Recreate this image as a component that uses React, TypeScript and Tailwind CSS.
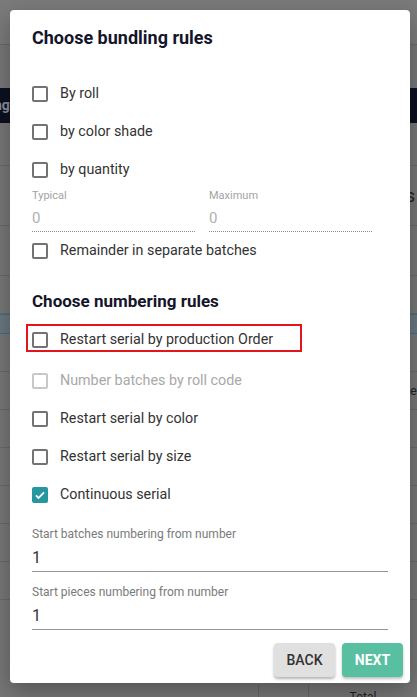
import React from 'react';

type RowProps = { label: string; checked?: boolean; disabled?: boolean };

const Checkbox: React.FC<RowProps> = ({ label, checked, disabled }) => (
  <label className="flex h-[38px] items-center">
    {checked ? (
      <span className="flex h-4 w-4 items-center justify-center rounded-[2px] bg-[#26979f]">
        <svg viewBox="0 0 24 24" className="h-[14px] w-[14px]" fill="none" stroke="white" strokeWidth="3">
          <path d="M5 12.5l4.5 4.5L19 7.5" />
        </svg>
      </span>
    ) : (
      <span
        className={`h-4 w-4 rounded-[2px] border-2 ${disabled ? 'border-[#c8c8c8]' : 'border-[#737373]'}`}
      />
    )}
    <span className={`ml-[12px] text-[14.3px] ${disabled ? 'text-[#a8a8a8]' : 'text-[#333333]'}`}>{label}</span>
  </label>
);

const NumberField: React.FC<{ label: string; value: string }> = ({ label, value }) => (
  <div className="flex flex-col">
    <span className="text-[12px] leading-[14px] text-[#7a7a7a]">{label}</span>
    <span className="flex h-[31px] items-center border-b border-[#949494] pt-[4px] text-[16px] text-[#333333]">{value}</span>
  </div>
);

export default function App() {
  return (
    <div className="relative h-[697px] w-[417px] overflow-hidden bg-[#777777] font-['Roboto',sans-serif]">
      {/* dimmed page behind the dialog */}
      <div className="flex flex-col">
        <div className="h-[45px] border-b border-[#6a6a6a] bg-[#7b7b7b]" />
        <div className="h-[43px]" />
        <div className="flex h-[35px] items-center bg-[#0d1020] text-[14px] font-bold text-[#8a8fa0]">
          <span className="-ml-[6px]">ngt</span>
        </div>
        <div className="h-[43px] border-b border-[#6a6a6a]" />
        <div className="flex h-[60px] items-center justify-end border-b border-[#6a6a6a] pr-[2px] text-[18px] text-[#222]">s</div>
        <div className="h-[50px] border-b border-[#6a6a6a]" />
        <div className="h-[38px] border-b border-[#6a6a6a]" />
        <div className="h-[20px] border-y border-[#3f6f86] bg-[#6a7880]" />
        <div className="h-[38px] border-b border-[#6a6a6a]" />
        <div className="flex h-[38px] items-center justify-end border-b border-[#6a6a6a] text-[13px] text-[#222]">ke</div>
        <div className="h-[38px] border-b border-[#6a6a6a]" />
        <div className="h-[38px] border-b border-[#6a6a6a]" />
        <div className="h-[38px] border-b border-[#6a6a6a]" />
        <div className="h-[38px] border-b border-[#6a6a6a]" />
        <div className="h-[38px] border-b border-[#6a6a6a]" />
      </div>
      <div className="absolute bottom-0 left-[308px] flex h-[12px] w-[109px] justify-center border-l border-[#666] text-[12px] leading-[24px] text-[#222]">
        Total
      </div>
      <div className="absolute bottom-0 left-[258px] h-[12px] border-l border-[#666]" />

      {/* dialog */}
      <div className="absolute left-[10px] top-[10px] flex h-[673px] w-[400px] flex-col rounded-[4px] bg-white px-[22px] pt-[14px] shadow-[0_8px_24px_rgba(0,0,0,0.3)]">
        <h2 className="text-[18px] font-bold leading-[28px] text-[#14152b]">Choose bundling rules</h2>
        <div className="mt-[23px] flex flex-col">
          <Checkbox label="By roll" />
          <Checkbox label="by color shade" />
          <Checkbox label="by quantity" />
          <div className="grid grid-cols-2 gap-[14px] pr-[16px]">
            <div className="flex flex-col">
              <span className="text-[11px] leading-[13px] text-[#a3a3a3]">Typical</span>
              <span className="flex h-[30px] items-center border-b border-dotted border-[#8a8a8a] pt-[3px] text-[15px] text-[#b0b0b0]">0</span>
            </div>
            <div className="flex flex-col">
              <span className="text-[11px] leading-[13px] text-[#a3a3a3]">Maximum</span>
              <span className="flex h-[30px] items-center border-b border-dotted border-[#8a8a8a] pt-[3px] text-[15px] text-[#b0b0b0]">0</span>
            </div>
          </div>
          <Checkbox label="Remainder in separate batches" />
        </div>

        <h2 className="mt-[19px] text-[17px] font-bold leading-[24px] text-[#14152b]">Choose numbering rules</h2>
        <div className="mt-[11px] flex flex-col">
          <div className="-mx-[6px] w-[276px] border-2 border-[#e4141e] px-[4px]">
            <div className="flex h-[24px] items-center pt-[4px]">
              <span className="h-4 w-4 rounded-[2px] border-2 border-[#737373]" />
              <span className="ml-[12px] text-[14.3px] text-[#333333]">Restart serial by production Order</span>
            </div>
          </div>
          <div className="mt-[10px] flex flex-col">
            <Checkbox label="Number batches by roll code" disabled />
            <Checkbox label="Restart serial by color" />
            <Checkbox label="Restart serial by size" />
            <Checkbox label="Continuous serial" checked />
          </div>
        </div>

        <div className="mt-[13px] flex flex-col gap-[13px]">
          <NumberField label="Start batches numbering from number" value="1" />
          <NumberField label="Start pieces numbering from number" value="1" />
        </div>

        <div className="-mr-[15px] mt-[13px] flex justify-end gap-[7px]">
          <button className="h-[34px] w-[61px] rounded-[4px] bg-[#e0e0e0] text-[14px] font-medium uppercase text-[#333] shadow-[0_2px_3px_rgba(0,0,0,0.3)]">
            Back
          </button>
          <button className="h-[34px] w-[61px] rounded-[4px] bg-[#58bfa1] text-[14px] font-bold uppercase text-white shadow-[0_2px_3px_rgba(0,0,0,0.25)]">
            Next
          </button>
        </div>
      </div>
    </div>
  );
}
